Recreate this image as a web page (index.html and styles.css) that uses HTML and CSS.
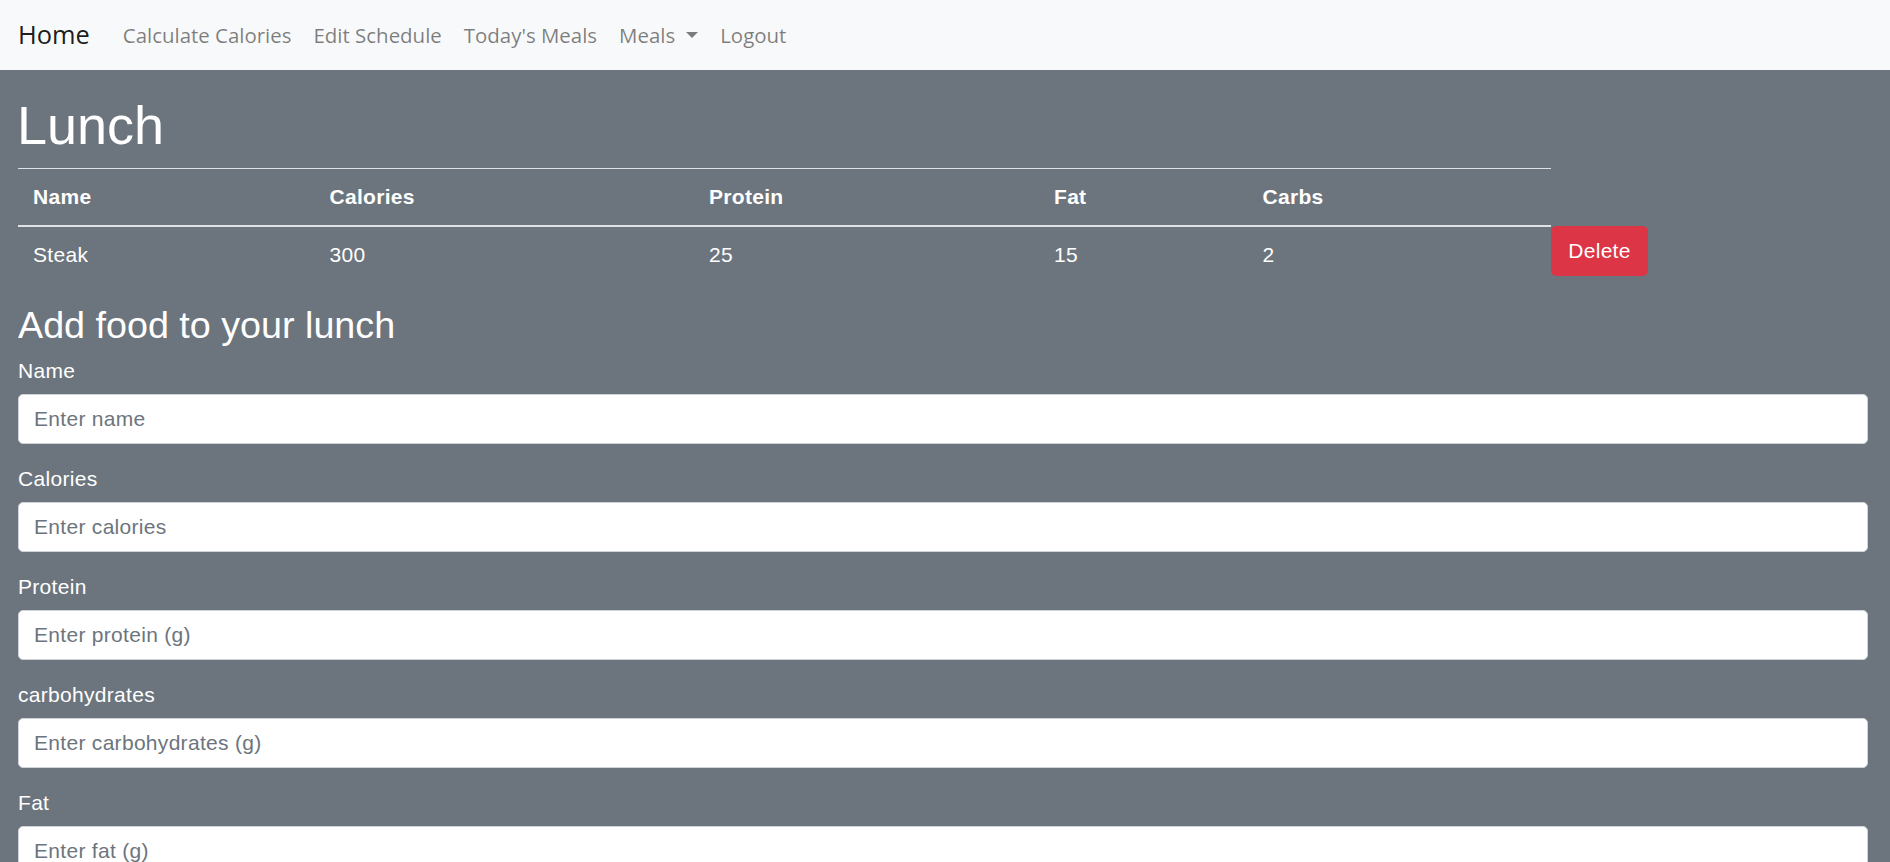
FILE: index.html
```html
<!DOCTYPE html>
<html lang="en">
<head>
<meta charset="utf-8">
<title>Lunch</title>
<link rel="stylesheet" href="styles.css">
</head>
<body>
<nav class="navbar">
  <a class="brand" href="#">Home</a>
  <ul class="nav-list">
    <li><a class="nav-link" href="#">Calculate Calories</a></li>
    <li><a class="nav-link" href="#">Edit Schedule</a></li>
    <li><a class="nav-link" href="#">Today's Meals</a></li>
    <li><a class="nav-link dropdown-toggle" href="#">Meals</a></li>
    <li><a class="nav-link" href="#">Logout</a></li>
  </ul>
</nav>
<main class="content">
  <h1 class="title">Lunch</h1>
  <table class="meal-table">
    <colgroup>
      <col class="col-name">
      <col class="col-cal">
      <col class="col-protein">
      <col class="col-fat">
      <col class="col-carbs">
      <col class="col-action">
    </colgroup>
    <thead>
      <tr><th>Name</th><th>Calories</th><th>Protein</th><th>Fat</th><th>Carbs</th></tr>
    </thead>
    <tbody>
      <tr><td>Steak</td><td>300</td><td>25</td><td>15</td><td>2</td><td class="action-cell"><button class="btn-delete" type="button">Delete</button></td></tr>
    </tbody>
  </table>
  <h2 class="subtitle">Add food to your lunch</h2>
  <form class="food-form">
    <div class="form-group">
      <label for="f-name">Name</label>
      <input id="f-name" class="form-control" type="text" placeholder="Enter name">
    </div>
    <div class="form-group">
      <label for="f-cal">Calories</label>
      <input id="f-cal" class="form-control" type="text" placeholder="Enter calories">
    </div>
    <div class="form-group">
      <label for="f-protein">Protein</label>
      <input id="f-protein" class="form-control" type="text" placeholder="Enter protein (g)">
    </div>
    <div class="form-group">
      <label for="f-carbs">carbohydrates</label>
      <input id="f-carbs" class="form-control" type="text" placeholder="Enter carbohydrates (g)">
    </div>
    <div class="form-group">
      <label for="f-fat">Fat</label>
      <input id="f-fat" class="form-control" type="text" placeholder="Enter fat (g)">
    </div>
  </form>
</main>
</body>
</html>
```

FILE: styles.css
```css
html, body {
  margin: 0;
  padding: 0;
}

body {
  background: #6c757d;
  font-family: "Liberation Sans", Arial, sans-serif;
  color: #fff;
}

.navbar {
  display: flex;
  align-items: center;
  height: 70px;
  padding: 0 18px;
  box-sizing: border-box;
  background: #f8f9fa;
  font-family: "Open Sans", "Noto Sans", sans-serif;
}

.brand {
  font-size: 25.4px;
  line-height: 37.5px;
  color: rgba(0, 0, 0, 0.9);
  text-decoration: none;
  margin-right: 22px;
}

.nav-list {
  display: flex;
  list-style: none;
  margin: 0;
  padding: 0;
}

.nav-link {
  display: block;
  padding: 0 11px;
  font-size: 20.45px;
  line-height: 30px;
  color: rgba(0, 0, 0, 0.5);
  text-decoration: none;
}

.dropdown-toggle::after {
  content: "";
  display: inline-block;
  margin-left: 11px;
  vertical-align: 5px;
  border-top: 6px solid;
  border-left: 6.5px solid transparent;
  border-right: 6.5px solid transparent;
  border-bottom: 0;
}

.content {
  padding: 23px 22px 40px 18px;
}

.title {
  margin: 0 0 10px -1px;
  font-size: 54px;
  line-height: 1.2;
  font-weight: 400;
}

.meal-table {
  border-collapse: separate;
  border-spacing: 0;
  table-layout: fixed;
  width: 1630px;
  margin-bottom: 20px;
  font-size: 21px;
  letter-spacing: 0.3px;
  line-height: 30px;
}

.col-name { width: 296.5px; }
.col-cal { width: 379.5px; }
.col-protein { width: 345px; }
.col-fat { width: 208.5px; }
.col-carbs { width: 303.5px; }
.col-action { width: 97px; }

.meal-table th {
  text-align: left;
  font-weight: 700;
  padding: 13px 15px;
  border-top: 1px solid #dee2e6;
  border-bottom: 2px solid #dee2e6;
  vertical-align: bottom;
}

.meal-table td {
  padding: 13px 15px;
  vertical-align: top;
}

.meal-table td.action-cell {
  padding: 0;
}

.btn-delete {
  display: block;
  width: 97px;
  height: 50px;
  margin-top: -1px;
  padding: 0;
  border: 1px solid #dc3545;
  border-radius: 5px;
  background: #dc3545;
  color: #fff;
  font-family: "Liberation Sans", Arial, sans-serif;
  font-size: 21px;
  letter-spacing: 0.3px;
  line-height: 48px;
  cursor: pointer;
}

.subtitle {
  margin: 0 0 8px;
  font-size: 37.7px;
  line-height: 1.2;
  font-weight: 400;
}

.form-group {
  margin-bottom: 20px;
}

.form-group label {
  display: block;
  font-size: 21px;
  letter-spacing: 0.3px;
  line-height: 30px;
  margin-bottom: 8px;
}

.form-control {
  display: block;
  box-sizing: border-box;
  width: 100%;
  height: 50px;
  padding: 0 15px;
  border: 1px solid #ced4da;
  border-radius: 5px;
  background: #fff;
  color: #495057;
  font-family: "Liberation Sans", Arial, sans-serif;
  font-size: 21px;
  letter-spacing: 0.3px;
}

.form-control::placeholder {
  color: #6c757d;
  opacity: 1;
}
```
